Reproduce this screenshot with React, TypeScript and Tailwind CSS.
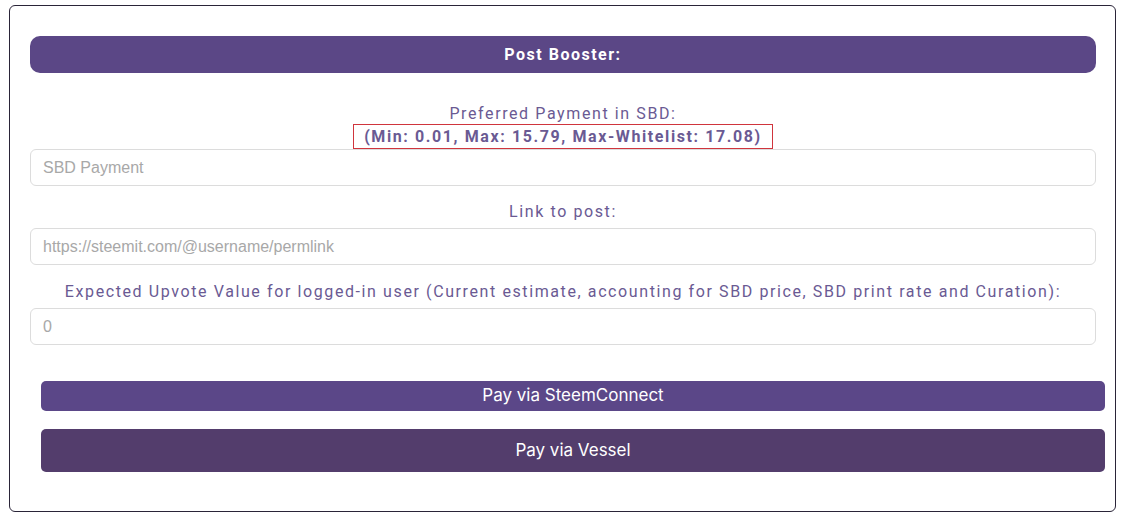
export default function App() {
  const label = "text-center text-[16px] leading-[20px] tracking-[1.6px] text-[#6a5a93] font-['Roboto',sans-serif]";
  const input =
    "block w-full h-[37px] rounded-[6px] border border-[#dcdcdc] bg-white px-[12px] text-[16px] font-['Liberation_Sans',Arial,sans-serif] text-[#555] placeholder:text-[#a8a8a8] outline-none";

  return (
    <div className="w-[1125px] h-[524px] bg-white pt-[5px] px-[9px]">
      <div className="h-[507px] rounded-[6px] border border-[#2a2438] pt-[30px] pl-[20px] pr-[19px]">
        {/* header */}
        <div className="h-[37px] rounded-[10px] bg-[#5b4786] flex items-center justify-center text-white font-bold text-[16px] tracking-[1.5px] font-['Roboto',sans-serif]">
          Post Booster:
        </div>

        <div className="mt-[31px] flex flex-col items-center">
          <p className={label}>Preferred Payment in SBD:</p>
          <p className="h-[25px] border border-[#d0353d] px-[10px] text-[16px] leading-[23px] font-bold tracking-[1.6px] text-[#6a5a93] font-['Roboto',sans-serif]">
            (Min: 0.01, Max: 15.79, Max-Whitelist: 17.08)
          </p>
        </div>
        <input className={input} placeholder="SBD Payment" />

        <p className={`${label} mt-[16px] mb-[6px]`}>Link to post:</p>
        <input className={input} placeholder="https://steemit.com/@username/permlink" />

        <p className={`${label} mt-[17px] mb-[6px]`}>
          Expected Upvote Value for logged-in user (Current estimate, accounting for SBD price, SBD print rate and Curation):
        </p>
        <input className={input} defaultValue="0" readOnly style={{ color: "#a8a8a8" }} />

        {/* buttons */}
        <div className="ml-[11px] mr-[-9px] mt-[36px] flex flex-col gap-[18px] font-['Inter',sans-serif] text-white">
          <button className="h-[30px] w-full rounded-[5px] bg-[#5b4788] text-[17px]">Pay via SteemConnect</button>
          <button className="h-[43px] w-full rounded-[5px] bg-[#533d6c] text-[17px]">Pay via Vessel</button>
        </div>
      </div>
    </div>
  );
}
